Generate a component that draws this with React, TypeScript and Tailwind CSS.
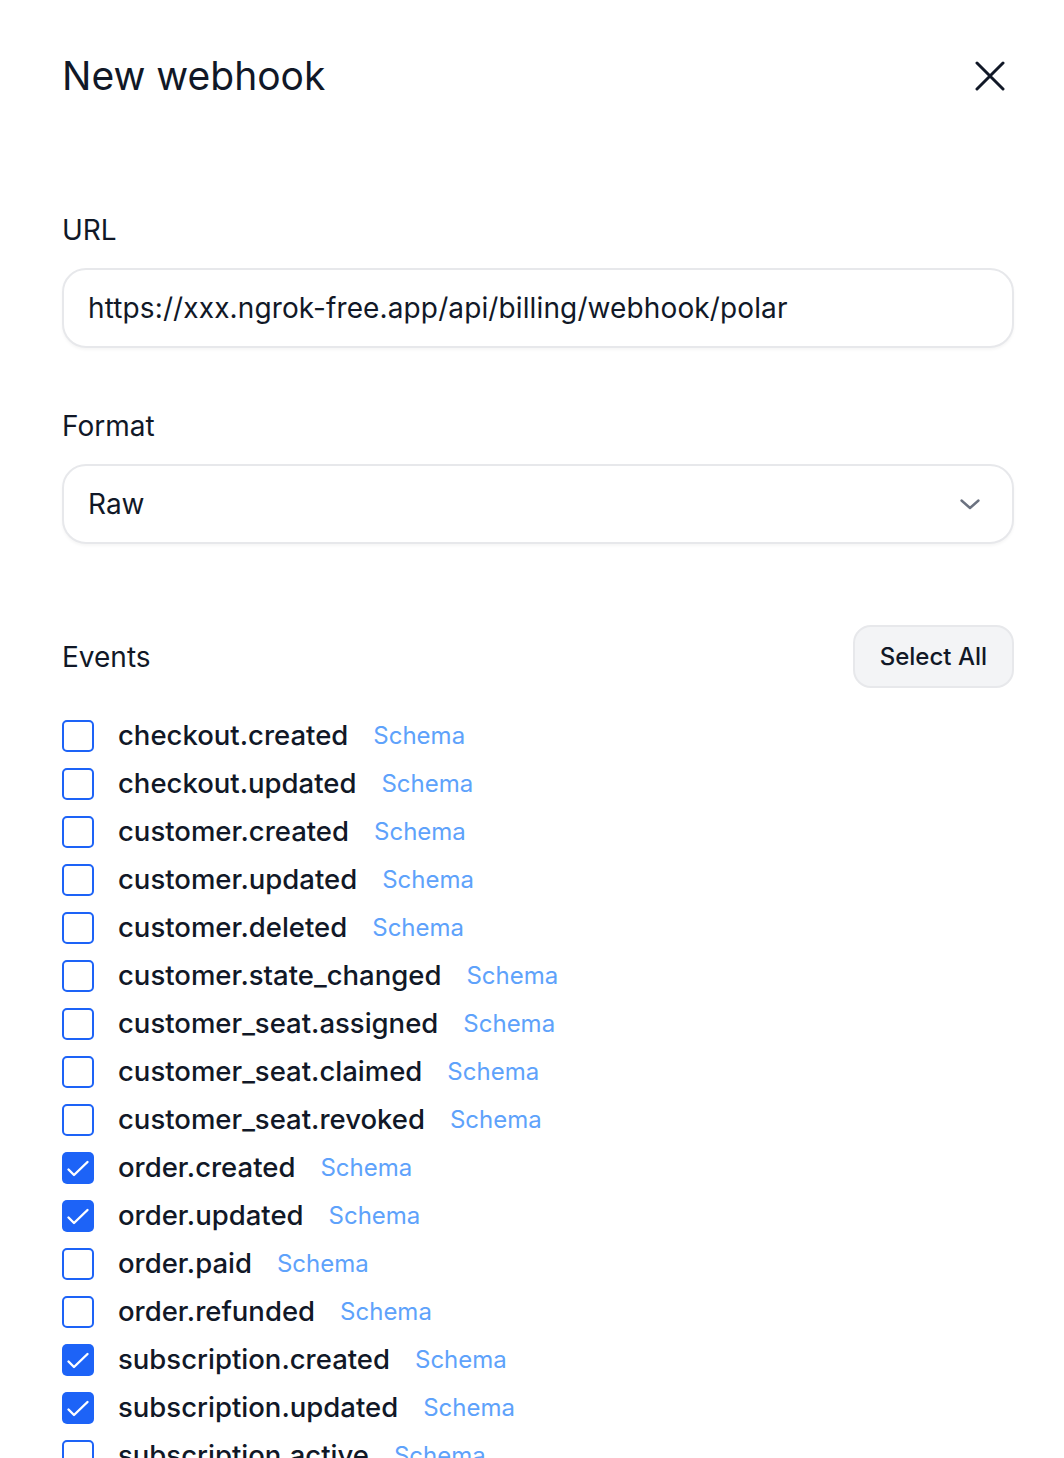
import React from "react";

type Evt = { name: string; checked: boolean };

const events: Evt[] = [
  { name: "checkout.created", checked: false },
  { name: "checkout.updated", checked: false },
  { name: "customer.created", checked: false },
  { name: "customer.updated", checked: false },
  { name: "customer.deleted", checked: false },
  { name: "customer.state_changed", checked: false },
  { name: "customer_seat.assigned", checked: false },
  { name: "customer_seat.claimed", checked: false },
  { name: "customer_seat.revoked", checked: false },
  { name: "order.created", checked: true },
  { name: "order.updated", checked: true },
  { name: "order.paid", checked: false },
  { name: "order.refunded", checked: false },
  { name: "subscription.created", checked: true },
  { name: "subscription.updated", checked: true },
  { name: "subscription.active", checked: false },
  { name: "subscription.canceled", checked: false },
];

function Box({ checked }: { checked: boolean }) {
  if (checked) {
    return (
      <span className="block h-[32px] w-[32px] shrink-0 rounded-[5px] bg-[#1d63f7]">
        <svg width="32" height="32" viewBox="0 0 32 32" fill="none" stroke="white" strokeWidth="2.4" strokeLinecap="round" strokeLinejoin="round">
          <path d="M6.5 17.5L12 23L25.5 10" />
        </svg>
      </span>
    );
  }
  return <span className="block h-[32px] w-[32px] shrink-0 rounded-[5px] border-[2px] border-[#1d63f7] bg-white" />;
}

export default function App() {
  return (
    <div
      className="min-h-[1458px] w-[1064px] overflow-hidden bg-white text-[#111827]"
      style={{ fontFamily: "Inter, 'Noto Sans', sans-serif" }}
    >
      <div className="pl-[62px] pr-[50px]">
        <div className="flex h-[152px] items-start justify-between pt-[52px]">
          <h1 className="text-[39px] leading-[48px] font-normal text-[#111827]">New webhook</h1>
          <button className="mr-[9px] mt-[9px] flex h-[30px] w-[30px] items-center justify-center">
            <svg width="30" height="30" viewBox="0 0 30 30" fill="none" stroke="#111827" strokeWidth="3" strokeLinecap="round">
              <path d="M2 2L28 28M28 2L2 28" />
            </svg>
          </button>
        </div>

        <div className="mt-[62px]">
          <div className="text-[28px] leading-[32px] text-[#111827]">URL</div>
          <div className="mt-[22px] flex h-[80px] items-center rounded-[24px] border-[2px] border-[#e7e8eb] bg-white px-[24px] shadow-[0_2px_3px_rgba(0,0,0,0.04)]">
            <span className="text-[28px] tracking-[0.12px] text-[#111827]">https://xxx.ngrok-free.app/api/billing/webhook/polar</span>
          </div>
        </div>

        <div className="mt-[62px]">
          <div className="text-[28px] leading-[32px] text-[#111827]">Format</div>
          <div className="mt-[22px] flex h-[80px] items-center justify-between rounded-[24px] border-[2px] border-[#e7e8eb] bg-white pl-[24px] pr-[30px] shadow-[0_2px_3px_rgba(0,0,0,0.04)]">
            <span className="text-[28px] text-[#111827]">Raw</span>
            <svg width="24" height="24" viewBox="0 0 24 24" fill="none" stroke="#6b7280" strokeWidth="2.4" strokeLinecap="round" strokeLinejoin="round">
              <path d="M3.5 8.5L12 16L20.5 8.5" />
            </svg>
          </div>
        </div>

        <div className="mt-[81px] flex items-center justify-between">
          <div className="text-[28px] text-[#111827]">Events</div>
          <button className="flex h-[63px] items-center rounded-[18px] border-[2px] border-[#e7e8eb] bg-[#f3f4f6] px-[25px] text-[24px] font-medium text-[#111827]">
            Select All
          </button>
        </div>

        <div className="mt-[32px] flex flex-col gap-[16px]">
          {events.map((e) => (
            <div key={e.name} className="flex h-[32px] items-center">
              <Box checked={e.checked} />
              <span className="ml-[24px] text-[27.5px] font-medium text-[#111827]">{e.name}</span>
              <span className="ml-[25px] text-[24px] text-[#5ea2fb]">Schema</span>
            </div>
          ))}
        </div>
      </div>
    </div>
  );
}
